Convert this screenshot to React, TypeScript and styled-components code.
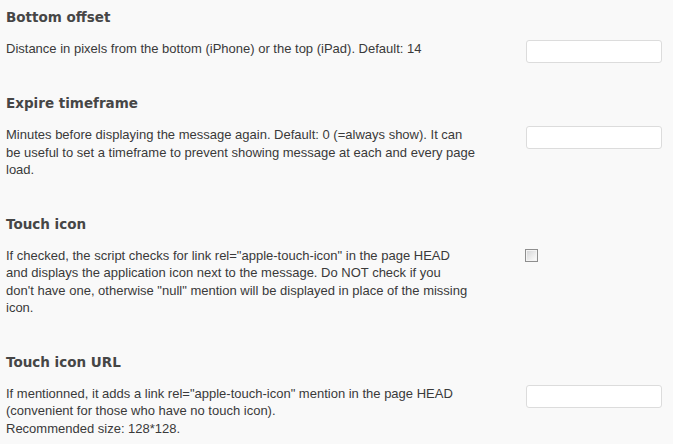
import React from "react";
import styled, { createGlobalStyle } from "styled-components";

const GlobalStyle = createGlobalStyle`
  html, body {
    margin: 0;
    padding: 0;
    background: #f9f9f9;
  }
  body {
    font-family: "Liberation Sans", Arial, sans-serif;
  }
`;

const Page = styled.div`
  width: 673px;
  min-height: 444px;
  box-sizing: border-box;
  padding: 7px 0 0 6px;
  background: #f9f9f9;
  display: flex;
  flex-direction: column;
  gap: 30px;
`;

const Section = styled.section`
  display: flex;
  flex-direction: column;
  gap: 13px;
`;

const Heading = styled.h3`
  margin: 0;
  font-family: "DejaVu Sans", Verdana, sans-serif;
  font-weight: bold;
  font-size: 13.5px;
  line-height: 20px;
  color: #464646;
`;

const Row = styled.div`
  display: flex;
  align-items: flex-start;
`;

const Description = styled.p`
  margin: 0;
  padding-bottom: 5px;
  width: 473px;
  flex: none;
  font-family: "Liberation Sans", Arial, sans-serif;
  font-size: 13px;
  line-height: 17.5px;
  color: #3a3a3a;
  white-space: nowrap;
`;

const Control = styled.div`
  margin-left: 46px;
  display: flex;
`;

const TextInput = styled.input`
  box-sizing: border-box;
  margin: 0 0 0 1px;
  width: 136px;
  height: 23px;
  border: 1px solid #dcdcdc;
  border-radius: 3px;
  background: #ffffff;
  outline: none;
`;

const Checkbox = styled.input`
  appearance: none;
  box-sizing: border-box;
  margin: 2px 0 0 0;
  width: 13px;
  height: 13px;
  border: 1px solid #8e8e8e;
  background: linear-gradient(135deg, #d2d3d5 0%, #eeeeee 60%, #ffffff 100%);
  box-shadow: inset 0 0 0 1px #f4f4f4;
`;

type Setting = {
  title: string;
  lines: string[];
  control: "text" | "checkbox";
};

const settings: Setting[] = [
  {
    title: "Bottom offset",
    lines: [
      "Distance in pixels from the bottom (iPhone) or the top (iPad). Default: 14",
    ],
    control: "text",
  },
  {
    title: "Expire timeframe",
    lines: [
      "Minutes before displaying the message again. Default: 0 (=always show). It can",
      "be useful to set a timeframe to prevent showing message at each and every page",
      "load.",
    ],
    control: "text",
  },
  {
    title: "Touch icon",
    lines: [
      'If checked, the script checks for link rel="apple-touch-icon" in the page HEAD',
      "and displays the application icon next to the message. Do NOT check if you",
      'don\'t have one, otherwise "null" mention will be displayed in place of the missing',
      "icon.",
    ],
    control: "checkbox",
  },
  {
    title: "Touch icon URL",
    lines: [
      'If mentionned, it adds a link rel="apple-touch-icon" mention in the page HEAD',
      "(convenient for those who have no touch icon).",
      "Recommended size: 128*128.",
    ],
    control: "text",
  },
];

export default function App() {
  return (
    <>
      <GlobalStyle />
      <Page>
        {settings.map((s) => (
          <Section key={s.title}>
            <Heading>{s.title}</Heading>
            <Row>
              <Description>
                {s.lines.map((l, i) => (
                  <React.Fragment key={i}>
                    {i > 0 && <br />}
                    {l}
                  </React.Fragment>
                ))}
              </Description>
              <Control>
                {s.control === "text" ? (
                  <TextInput type="text" />
                ) : (
                  <Checkbox type="checkbox" />
                )}
              </Control>
            </Row>
          </Section>
        ))}
      </Page>
    </>
  );
}
